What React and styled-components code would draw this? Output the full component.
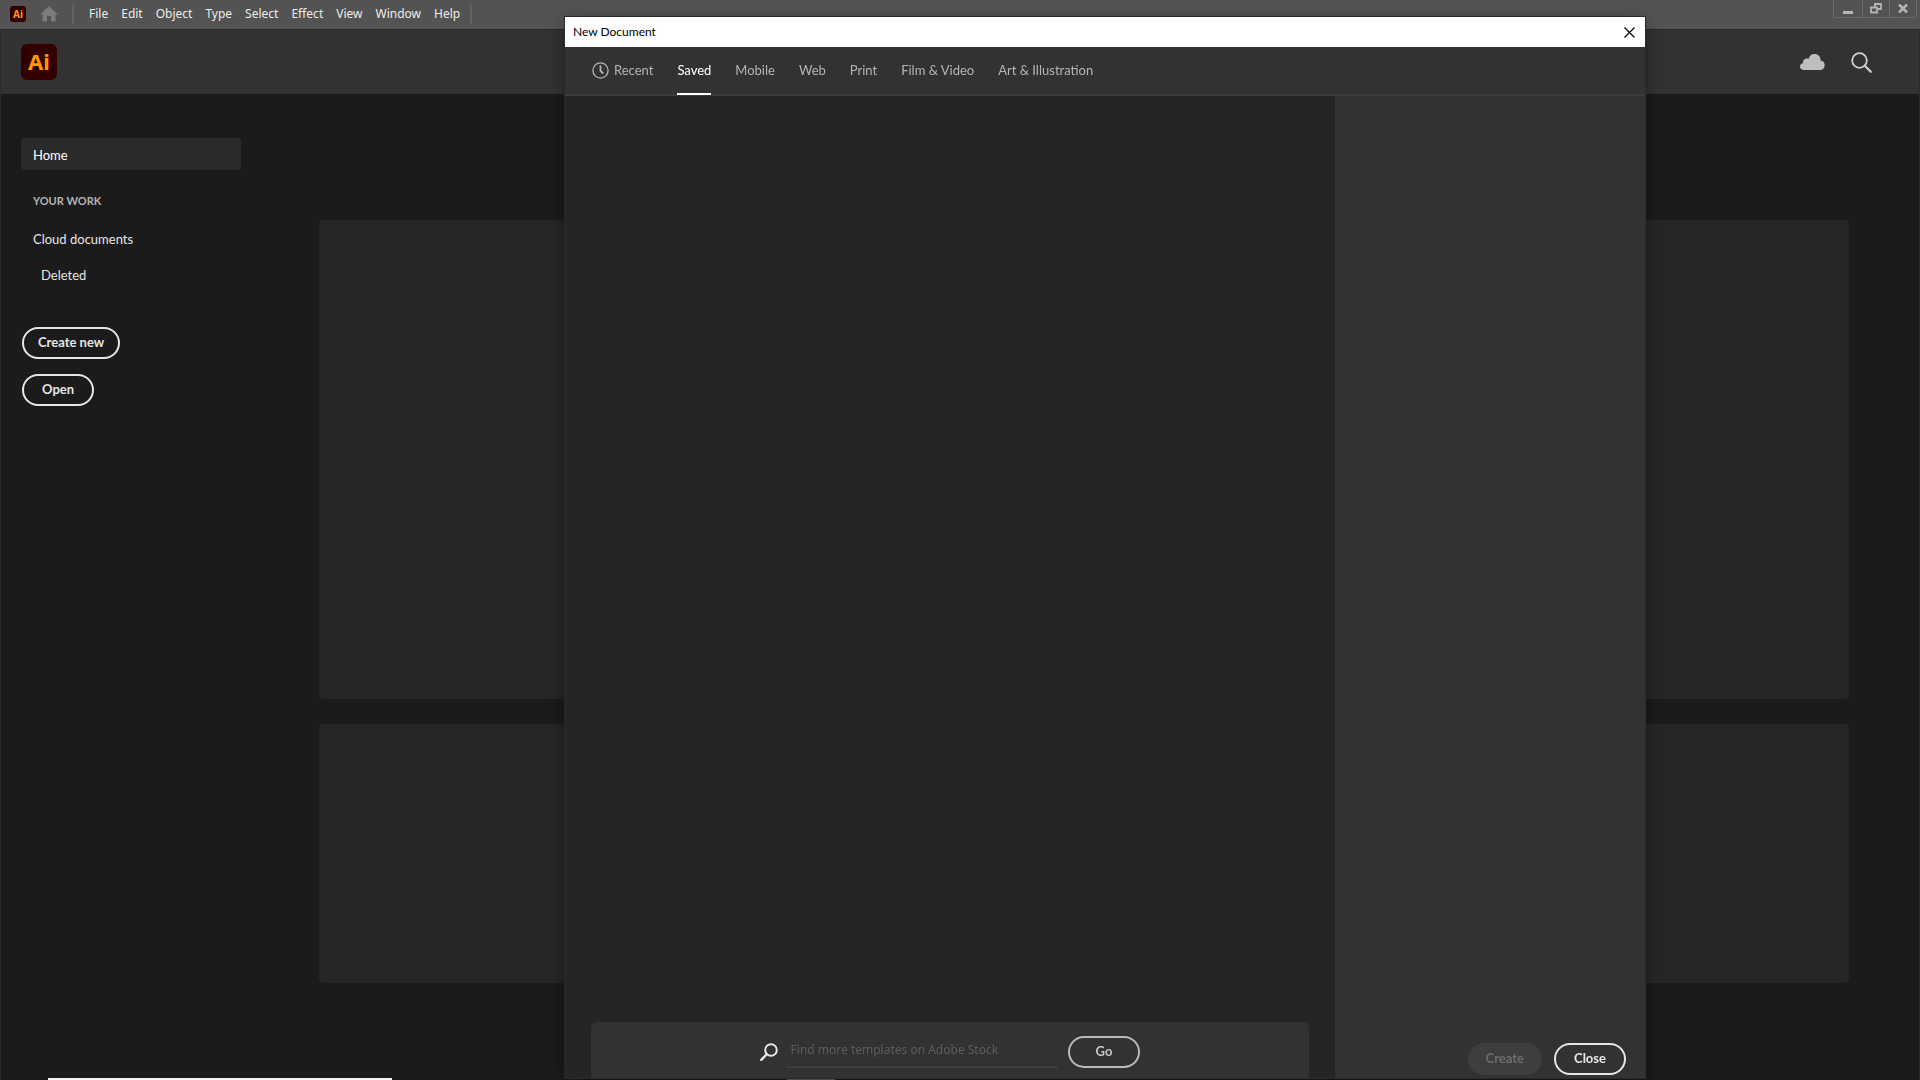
import React from 'react';
import styled, { createGlobalStyle, css } from 'styled-components';

const ui = '"Noto Sans", "Open Sans", sans-serif';
const brand = 'Lato, "Noto Sans", sans-serif';

const GlobalStyle = createGlobalStyle`
  * { box-sizing: border-box; }
  body {
    margin: 0;
    background: #1b1b1b;
    font-family: ${brand};
    font-size: 13px;
    line-height: 20px;
    overflow: hidden;
  }
  button, input { font-family: inherit; margin: 0; }
  svg { display: block; flex: none; }
`;

const AppWindow = styled.div`
  display: flex;
  flex-direction: column;
  height: 100vh;
  background: #1b1b1b;
  color: #e6e6e6;
`;

const MenuBar = styled.header`
  display: flex;
  justify-content: space-between;
  height: 30px;
  padding-left: 10px;
  background: #535353;
  border-bottom: 1px solid #282828;
`;

const MenuLeft = styled.div`
  display: flex;
  align-items: center;
  height: 28px;
`;

const AppBadge = styled.span`
  display: grid;
  place-items: center;
  width: ${(p) => (p.$large ? 36 : 16)}px;
  height: ${(p) => (p.$large ? 36 : 16)}px;
  border-radius: ${(p) => (p.$large ? 6 : 3)}px;
  padding-bottom: ${(p) => (p.$large ? 2 : 0)}px;
  background: #330000;
  color: #ff9a00;
  font: 700 ${(p) => (p.$large ? '22px/24px' : '10px/12px')} ${ui};
`;

const IconButton = styled.button`
  display: grid;
  place-items: center;
  padding: 0;
  border: 0;
  background: none;
  color: ${(p) => p.$color};
`;

const HomeButton = styled(IconButton)`
  margin: 0 14px;
`;

const Separator = styled.span`
  width: 2px;
  height: 20px;
  background: #626262;
`;

const Menus = styled.nav`
  display: flex;
  gap: 13px;
  padding: 0 10px 0 15px;
  font-family: ${ui};
`;

const MenuItem = styled.button`
  padding: 0 0 1px;
  border: 0;
  background: none;
  color: #ececec;
  font-size: 12px;
  line-height: 16px;
`;

const WindowControls = styled.div`
  display: flex;
  align-self: flex-start;
  height: 18px;
  margin-right: 3px;
  border: 1px solid #6a6a6a;
  border-top: 0;
  border-radius: 0 0 3px 3px;
`;

const WindowControl = styled(IconButton)`
  width: 28px;
  & + & { width: 27px; border-left: 1px solid #6a6a6a; }
`;

const Body = styled.div`
  display: flex;
  flex-direction: column;
  flex: 1;
  min-height: 0;
  border: solid #2b2b2b;
  border-width: 0 1px;
`;

const BrandBar = styled.div`
  display: flex;
  align-items: center;
  justify-content: space-between;
  height: 64px;
  padding: 0 47px 0 20px;
  background: #323232;
`;

const BrandActions = styled.div`
  display: flex;
  align-items: center;
  gap: 26px;
`;

const Workspace = styled.div`
  display: flex;
  flex: 1;
  min-height: 0;
`;

const Sidebar = styled.aside`
  display: flex;
  flex-direction: column;
  width: 260px;
  padding: 44px 20px 0;
`;

const NavLink = styled.a`
  display: block;
  padding: 7px ${(p) => (p.$nested ? 20 : 12)}px 5px;
  border-radius: 4px;
  color: #e6e6e6;
  text-decoration: none;
  ${(p) => p.$active && css`
    background: #2a2a2a;
    color: #fff;
  `}
`;

const NavGroup = styled.section`
  display: flex;
  flex-direction: column;
  gap: 4px;
  margin-top: 21px;
`;

const NavHeading = styled.h2`
  margin: 0 0 7px;
  padding: 0 12px;
  color: #b4b4b4;
  font-size: 11px;
  font-weight: 700;
  line-height: 20px;
`;

const SidebarActions = styled.div`
  display: flex;
  flex-direction: column;
  align-items: flex-start;
  gap: 15px;
  margin-top: 37px;
  padding-left: 1px;
`;

const PillButton = styled.button`
  height: 32px;
  padding: 0 ${(p) => p.$pad || 18}px 2px;
  border: 2px solid #e6e6e6;
  border-radius: 16px;
  background: transparent;
  color: #e6e6e6;
  font-size: 13px;
  font-weight: 700;
  line-height: 20px;
  ${(p) => p.$muted && css`
    border-color: #b9b9b9;
    color: #c6c6c6;
  `}
  &:disabled {
    border-color: #3e3e3e;
    background: #3e3e3e;
    color: #6e6e6e;
  }
`;

const Content = styled.main`
  display: grid;
  flex: 1;
  grid-template-rows: 479px 259px;
  gap: 25px;
  align-content: start;
  padding: 126px 70px 0 58px;
`;

const Card = styled.div`
  border-radius: 5px;
  background: #262626;
`;

const Dialog = styled.section`
  position: fixed;
  top: 17px;
  bottom: 2px;
  left: 565px;
  display: flex;
  flex-direction: column;
  width: 1080px;
  background: #323232;
  box-shadow: 0 0 0 1px #2a2a2a, 0 4px 16px rgba(0, 0, 0, 0.4);
`;

const TitleBar = styled.header`
  display: flex;
  align-items: center;
  justify-content: space-between;
  height: 30px;
  padding: 0 10px 0 8px;
  background: #fff;
  color: #000;
`;

const DialogTitle = styled.h1`
  margin: 0;
  font-size: 12px;
  font-weight: 400;
  line-height: 16px;
`;

const Tabs = styled.nav`
  display: flex;
  gap: 24px;
  height: 49px;
  padding: 0 27px;
  border-bottom: 2px solid #3b3b3b;
`;

const Tab = styled.button`
  display: flex;
  align-items: center;
  gap: 5px;
  height: 48px;
  padding: 2px 0;
  border: 0;
  border-bottom: 2px solid ${(p) => (p.$active ? '#fff' : 'transparent')};
  background: none;
  color: ${(p) => (p.$active ? '#fff' : '#b4b4b4')};
  font-size: 13px;
  line-height: 20px;
`;

const Panels = styled.div`
  display: flex;
  flex: 1;
  min-height: 0;
`;

const Templates = styled.div`
  display: flex;
  flex: 1;
  flex-direction: column;
  justify-content: flex-end;
  padding: 0 26px;
  background: #252525;
`;

const StockSearch = styled.form`
  display: flex;
  align-items: flex-start;
  justify-content: center;
  height: 56px;
  padding-top: 14px;
  border-radius: 5px 5px 0 0;
  background: #323232;
`;

const SearchLabel = styled.label`
  display: grid;
  place-items: center;
  height: 32px;
  padding-right: 8px;
`;

const SearchInput = styled.input`
  width: 272px;
  height: 32px;
  margin-right: 10px;
  padding: 0 5px 4px;
  border: 0;
  border-bottom: 2px solid #3e3e3e;
  background: none;
  color: #e6e6e6;
  font-family: ${ui};
  font-size: 12px;
  outline: 0;
  &::placeholder { color: #5c5c5c; opacity: 1; }
`;

const Details = styled.aside`
  display: flex;
  align-items: flex-end;
  justify-content: flex-end;
  gap: 12px;
  width: 310px;
  padding: 0 19px 3px;
`;

const BottomEdge = styled.div`
  position: fixed;
  bottom: 0;
  left: ${(p) => p.$left}px;
  width: ${(p) => p.$width}px;
  height: 2px;
  background: ${(p) => p.$color};
`;

const menus = ['File', 'Edit', 'Object', 'Type', 'Select', 'Effect', 'View', 'Window', 'Help'];
const tabs = ['Recent', 'Saved', 'Mobile', 'Web', 'Print', 'Film & Video', 'Art & Illustration'];

const HomeIcon = () => (
  <svg width="18" height="16" viewBox="0 0 18 16" fill="currentColor">
    <path d="M9 0 18 8.500H15.500V15.500H11V10H7V15.500H2.500V8.500H0Z" />
  </svg>
);

const CloudIcon = () => (
  <svg width="25" height="18" viewBox="0 0 25 18" fill="currentColor">
    <path d="M4 17C1.600 17 0 15.500 0 13.500c0-1.800 1.100-3 2.800-3.300C2.700 7.500 4.600 5.600 7 5.600c.6 0 1 .1 1.500.3C9.200 3 11.600 1 14.500 1c3.600 0 6 2.500 6 5.800v.7c2.500.1 4.200 1.900 4.200 4.500 0 3-2 5-4.700 5Z" />
  </svg>
);

const SearchIcon = () => (
  <svg width="21" height="21" viewBox="0 0 21 21" fill="none" stroke="currentColor" strokeWidth="1.800">
    <circle cx="8.500" cy="8.500" r="7.300" />
    <path d="m13.800 13.800 6 6" strokeWidth="2.200" strokeLinecap="round" />
  </svg>
);

const StockSearchIcon = () => (
  <svg width="18" height="18" viewBox="0 0 18 18" fill="none" stroke="#e6e6e6" strokeWidth="2">
    <circle cx="11" cy="7" r="5.800" />
    <path d="M6.800 11.200 1.300 16.800" strokeWidth="2.400" strokeLinecap="round" />
  </svg>
);

const ClockIcon = () => (
  <svg width="17" height="17" viewBox="0 0 17 17" fill="none" stroke="currentColor" strokeWidth="1.300">
    <circle cx="8.500" cy="8.500" r="7.600" />
    <path d="M8.500 3.500v5.300l2.700 2.700" strokeWidth="1.800" />
  </svg>
);

const CloseIcon = () => (
  <svg width="11" height="11" viewBox="0 0 11 11" stroke="#000" strokeWidth="1.200">
    <path d="m.5.5 10 10M10.500.5l-10 10" />
  </svg>
);

export default function App() {
  return (
    <>
      <GlobalStyle />
      <AppWindow>
        <MenuBar>
          <MenuLeft>
            <AppBadge>Ai</AppBadge>
            <HomeButton $color="#7b7b7b" aria-label="Home"><HomeIcon /></HomeButton>
            <Separator />
            <Menus>
              {menus.map((name) => <MenuItem key={name}>{name}</MenuItem>)}
            </Menus>
            <Separator />
          </MenuLeft>
          <WindowControls>
            <WindowControl $color="#b4b4b4" aria-label="Minimize">
              <svg width="12" height="12" viewBox="0 0 12 12"><path d="M1 8h10v3H1z" fill="currentColor" /></svg>
            </WindowControl>
            <WindowControl $color="#b4b4b4" aria-label="Restore">
              <svg width="12" height="11" viewBox="0 0 12 11" fill="none" stroke="currentColor" strokeWidth="1.800">
                <path d="M5 4V1h6v5H8M1 4.500h6v5H1z" />
              </svg>
            </WindowControl>
            <WindowControl $color="#b4b4b4" aria-label="Close window">
              <svg width="10" height="9" viewBox="0 0 10 9" stroke="currentColor" strokeWidth="2.600">
                <path d="m1 .5 8 8M9 .5l-8 8" />
              </svg>
            </WindowControl>
          </WindowControls>
        </MenuBar>
        <Body>
          <BrandBar>
            <AppBadge $large>Ai</AppBadge>
            <BrandActions>
              <IconButton $color="#bebebe" aria-label="Cloud storage"><CloudIcon /></IconButton>
              <IconButton $color="#d0d0d0" aria-label="Search"><SearchIcon /></IconButton>
            </BrandActions>
          </BrandBar>
          <Workspace>
            <Sidebar>
              <NavLink href="#home" $active>Home</NavLink>
              <NavGroup>
                <NavHeading>YOUR WORK</NavHeading>
                <NavLink href="#cloud">Cloud documents</NavLink>
                <NavLink href="#deleted" $nested>Deleted</NavLink>
              </NavGroup>
              <SidebarActions>
                <PillButton $pad={14}>Create new</PillButton>
                <PillButton>Open</PillButton>
              </SidebarActions>
            </Sidebar>
            <Content>
              <Card />
              <Card />
            </Content>
          </Workspace>
        </Body>
      </AppWindow>
      <BottomEdge $left={48} $width={344} $color="#f6f3f0" />
      <BottomEdge $left={787} $width={48} $color="#666" />
      <Dialog role="dialog" aria-labelledby="dialog-title">
        <TitleBar>
          <DialogTitle id="dialog-title">New Document</DialogTitle>
          <IconButton $color="#000" aria-label="Close dialog"><CloseIcon /></IconButton>
        </TitleBar>
        <Tabs>
          {tabs.map((name) => (
            <Tab key={name} $active={name === 'Saved'}>
              {name === 'Recent' && <ClockIcon />}
              {name}
            </Tab>
          ))}
        </Tabs>
        <Panels>
          <Templates>
            <StockSearch onSubmit={(e) => e.preventDefault()}>
              <SearchLabel htmlFor="stock" aria-label="Search Adobe Stock"><StockSearchIcon /></SearchLabel>
              <SearchInput id="stock" type="text" placeholder="Find more templates on Adobe Stock" />
              <PillButton $muted $pad={26}>Go</PillButton>
            </StockSearch>
          </Templates>
          <Details>
            <PillButton disabled $pad={16}>Create</PillButton>
            <PillButton>Close</PillButton>
          </Details>
        </Panels>
      </Dialog>
    </>
  );
}
